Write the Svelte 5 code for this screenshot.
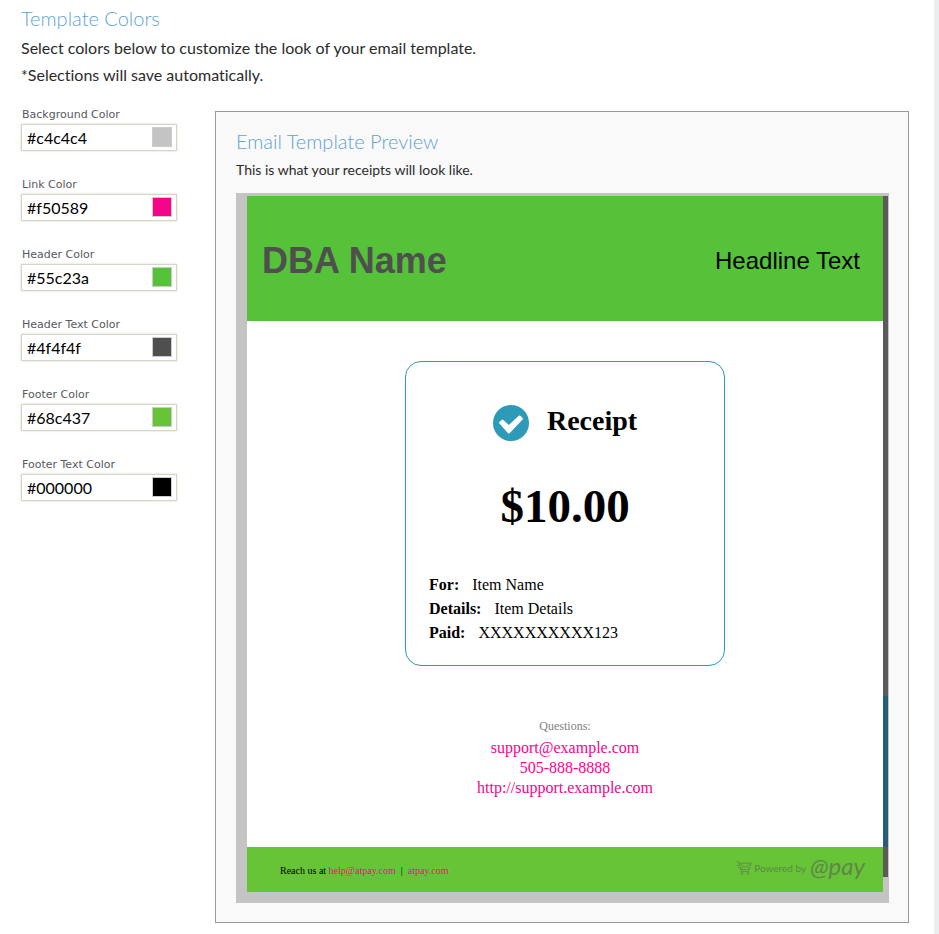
<script>
  let colors = $state([
    { id: 'background', label: 'Background Color', value: '#c4c4c4' },
    { id: 'link', label: 'Link Color', value: '#f50589' },
    { id: 'header', label: 'Header Color', value: '#55c23a' },
    { id: 'header-text', label: 'Header Text Color', value: '#4f4f4f' },
    { id: 'footer', label: 'Footer Color', value: '#68c437' },
    { id: 'footer-text', label: 'Footer Text Color', value: '#000000' }
  ]);

  const details = [
    { term: 'For:', text: 'Item Name' },
    { term: 'Details:', text: 'Item Details' },
    { term: 'Paid:', text: 'XXXXXXXXXX123' }
  ];

  let theme = $derived(colors.map((c) => `--${c.id}: ${c.value}`).join('; '));
</script>

<div class="page" style={theme}>
  <main>
    <header class="intro">
      <h1>Template Colors</h1>
      <p>Select colors below to customize the look of your email template.</p>
      <p>*Selections will save automatically.</p>
    </header>

    <div class="columns">
      <form class="colors">
        {#each colors as color (color.id)}
          <div class="field">
            <label for={color.id}>{color.label}</label>
            <div class="box">
              <input id={color.id} type="text" bind:value={color.value} />
              <span class="swatch" style="background: {color.value}"></span>
            </div>
          </div>
        {/each}
      </form>

      <section class="preview">
        <h2>Email Template Preview</h2>
        <p class="note">This is what your receipts will look like.</p>

        <div class="frame">
          <article class="email">
            <div class="banner">
              <strong>DBA Name</strong>
              <span>Headline Text</span>
            </div>

            <div class="body">
              <div class="receipt">
                <div class="title">
                  <svg viewBox="0 0 36 36" width="36" height="36" aria-hidden="true">
                    <circle cx="18" cy="18" r="18" fill="#2d9ab7" />
                    <path d="M6.4 18.6 Q5.6 17.8 6.4 17 L8.8 14.9 Q9.6 14.3 10.4 15 L15.8 20.1 L25.8 10.8 Q26.6 10.1 27.4 10.8 L29.6 13 Q30.3 13.8 29.6 14.6 L16.6 28.2 Q15.8 29 15 28.2 Z" fill="#fff" />
                  </svg>
                  <h3>Receipt</h3>
                </div>
                <div class="amount">$10.00</div>
                <dl>
                  {#each details as row}
                    <div><dt>{row.term}</dt><dd>{row.text}</dd></div>
                  {/each}
                </dl>
              </div>

              <div class="questions">
                <span>Questions:</span>
                <a href="mailto:support@example.com">support@example.com</a>
                <a href="tel:505-888-8888">505-888-8888</a>
                <a href="http://support.example.com">http://support.example.com</a>
              </div>
            </div>

            <footer>
              <p>Reach us at <a href="mailto:help@atpay.com">help@atpay.com</a> &nbsp;|&nbsp; <a href="http://atpay.com">atpay.com</a></p>
              <div class="powered">
                <svg viewBox="0 0 16 14" width="16" height="14" fill="none" stroke="currentColor" stroke-width="0.8" aria-hidden="true">
                  <path d="M0.3 0.8H2.4L3.2 2.2L5.2 10.6H13.2M3.2 2.2H15L13.4 8.6H4.8M3.2 2.2L9.3 6.4L15 2.2M5 8.4L7.6 5.4M13.4 8.4L11 5.4M0.8 4.4H3M1.8 6.8H3.6" />
                  <circle cx="6" cy="12.4" r="0.9" /><circle cx="12.2" cy="12.4" r="0.9" />
                </svg>
                <span>Powered by</span>
                <b>@pay</b>
              </div>
            </footer>
          </article>
          <div class="strip"><i></i></div>
        </div>
      </section>
    </div>
  </main>
</div>

<style>
  :global(body) {
    margin: 0;
    background: #eaeeee;
  }

  .page {
    min-height: 100vh;
    display: flex;
    padding-right: 5px;
    font-family: Lato, sans-serif;
    font-variant-ligatures: none;
    color: #2b2b2b;
  }

  main {
    flex: 1;
    box-sizing: border-box;
    padding: 5px 25px 11px 21px;
    background: #fff;
  }

  h1,
  h2 {
    margin: 0;
    font-size: 20px;
    line-height: 26px;
    font-weight: 300;
    color: #5da3d5;
  }

  p {
    margin: 0;
  }

  .intro p {
    font-size: 16px;
    line-height: 27px;
  }

  .intro h1 {
    margin-bottom: 3px;
  }

  .columns {
    display: flex;
    align-items: flex-start;
    gap: 38px;
    margin-top: 23px;
  }

  .colors {
    flex: none;
    width: 156px;
    display: flex;
    flex-direction: column;
    gap: 27px;
    margin-top: -3px;
  }

  .field label {
    display: block;
    padding-left: 1px;
    font: 11px/14px "DejaVu Sans", sans-serif;
    color: #58585d;
    margin-bottom: 2px;
  }

  .box {
    box-sizing: border-box;
    display: flex;
    align-items: flex-start;
    height: 27px;
    padding: 2px 4px 0 5px;
    border: 1px solid #d5d5c8;
    box-shadow: 0 0 2px #d5d5c8;
    background: #fff;
  }

  .box input {
    flex: 1;
    min-width: 0;
    padding: 1px 0 0;
    border: 0;
    outline: 0;
    background: none;
    font: 16px/20px Lato, sans-serif;
    color: #000;
  }

  .swatch {
    box-sizing: border-box;
    width: 20px;
    height: 20px;
    border: 1px solid #ccc;
  }

  .preview {
    flex: 1;
    min-width: 0;
    padding: 16px 19px 19px 20px;
    border: 1px solid #999;
    background: #f9f9f9;
  }

  .note {
    margin: 5px 0 12px;
    font-size: 14px;
    line-height: 22px;
  }

  .frame {
    display: flex;
    padding: 3px 1px 11px 11px;
    background: var(--background);
  }

  .email {
    flex: 1;
    min-width: 0;
    background: #fff;
    font-family: "Liberation Serif", serif;
    color: #000;
  }

  .strip {
    width: 5px;
    margin-bottom: 15px;
    background: #5c5b5a;
    display: flex;
    align-items: flex-end;
  }

  .strip i {
    width: 5px;
    height: 151px;
    margin-bottom: 30px;
    background: #265f75;
  }

  .banner {
    display: flex;
    align-items: center;
    justify-content: space-between;
    height: 125px;
    padding: 0 23px 0 15px;
    background: var(--header);
    font-family: "Liberation Sans", sans-serif;
  }

  .banner strong {
    padding-top: 4px;
    font-size: 36px;
    line-height: 48px;
    color: var(--header-text);
  }

  .banner span {
    padding-top: 4px;
    font-size: 24px;
    line-height: 32px;
  }

  .body {
    padding: 40px 20px 49px;
    display: flex;
    flex-direction: column;
    align-items: center;
  }

  .receipt {
    box-sizing: border-box;
    width: 320px;
    padding: 39px 23px 20px;
    border: 1px solid #2d9ab7;
    border-radius: 16px;
  }

  .title {
    display: flex;
    align-items: center;
    justify-content: center;
    gap: 18px;
    height: 40px;
  }

  .title svg {
    margin-top: 4px;
  }

  h3 {
    margin: 0;
    font-size: 28px;
    line-height: 32px;
  }

  .amount {
    margin: 37px 0 39px;
    text-align: center;
    font-size: 47px;
    line-height: 56px;
    font-weight: bold;
  }

  dl {
    margin: 0;
    font-size: 16px;
    line-height: 24px;
  }

  dl div {
    display: flex;
    gap: 13px;
  }

  dt {
    font-weight: bold;
  }

  dd {
    margin: 0;
  }

  .questions {
    display: flex;
    flex-direction: column;
    align-items: center;
    margin-top: 49px;
    font-size: 16px;
    line-height: 20px;
  }

  .questions span {
    font-size: 12px;
    line-height: 23px;
    color: #808080;
  }

  a {
    color: var(--link);
    text-decoration: none;
  }

  footer {
    display: flex;
    align-items: center;
    justify-content: space-between;
    height: 45px;
    padding: 0 18px 0 33px;
    background: var(--footer);
    color: var(--footer-text);
    font-size: 10px;
    line-height: 16px;
  }

  footer p {
    padding-top: 2px;
  }

  .powered {
    display: flex;
    align-items: center;
    padding-bottom: 4px;
    color: #5d8748;
    font-family: Lato, sans-serif;
  }

  .powered span {
    margin: 0 4px 0 2px;
  }

  .powered b {
    padding-bottom: 4px;
    font-size: 24px;
    line-height: 26px;
    font-weight: 400;
    font-style: italic;
  }
</style>
